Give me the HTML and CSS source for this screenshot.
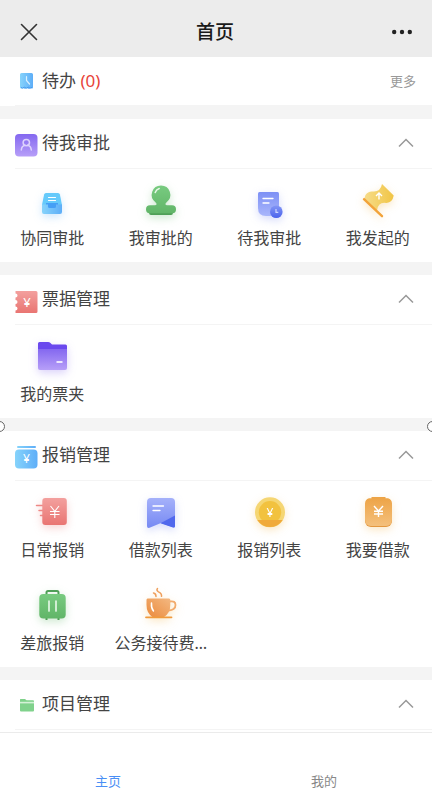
FILE: index.html
```html
<!DOCTYPE html>
<html lang="zh-CN">
<head>
    <meta charset="UTF-8">
    <meta name="viewport" content="width=device-width, initial-scale=1.0">
    <title>首页</title>
    <link rel="stylesheet" href="styles.css">
</head>
<body>
    <!-- shared gradients -->
    <svg class="defs" width="0" height="0" aria-hidden="true">
        <defs>
            <linearGradient id="sky" x1="0" y1="0" x2="1" y2="0"><stop offset="0" stop-color="#86d3fb"/><stop offset="1" stop-color="#5eaef8"/></linearGradient>
            <linearGradient id="violet" x1="0" y1="0" x2="0" y2="1"><stop offset="0" stop-color="#8468f0"/><stop offset="1" stop-color="#b79ff8"/></linearGradient>
            <linearGradient id="red" x1="0" y1="0" x2="0" y2="1"><stop offset="0" stop-color="#f3a09e"/><stop offset="1" stop-color="#e97572"/></linearGradient>
            <linearGradient id="green" x1="0" y1="0" x2="0" y2="1"><stop offset="0" stop-color="#78cb80"/><stop offset="1" stop-color="#61b568"/></linearGradient>
            <linearGradient id="indigo" x1="0" y1="0" x2="0" y2="1"><stop offset="0" stop-color="#7d90f5"/><stop offset="1" stop-color="#a9b6fb"/></linearGradient>
            <linearGradient id="indigo-deep" x1="0" y1="0" x2="0" y2="1"><stop offset="0" stop-color="#a5b1fa"/><stop offset="1" stop-color="#7689f3"/></linearGradient>
            <linearGradient id="clock" x1="0" y1="0" x2="0" y2="1"><stop offset="0" stop-color="#8396f5"/><stop offset="1" stop-color="#4a63ec"/></linearGradient>
            <linearGradient id="gold" x1="0" y1="0" x2="1" y2="0"><stop offset="0" stop-color="#f6dc8a"/><stop offset="1" stop-color="#f1c545"/></linearGradient>
            <linearGradient id="orange" x1="0" y1="0" x2="0" y2="1"><stop offset="0" stop-color="#eda345"/><stop offset="1" stop-color="#f4c07c"/></linearGradient>
            <linearGradient id="coffee" x1="1" y1="0" x2="0" y2="1"><stop offset="0" stop-color="#f3b881"/><stop offset="1" stop-color="#eb8a3c"/></linearGradient>
        </defs>
    </svg>

    <div class="app">
        <header class="navbar">
            <button class="nav-btn" type="button" aria-label="关闭">
                <svg width="18" height="18" viewBox="0 0 18 18"><path d="M1.500 1.500l15 15M16.500 1.500l-15 15" fill="none" stroke="#333" stroke-width="1.600" stroke-linecap="round"/></svg>
            </button>
            <h1 class="nav-title">首页</h1>
            <button class="nav-btn" type="button" aria-label="菜单">
                <svg width="20" height="18" viewBox="0 0 20 18" fill="#222"><circle cx="2.200" cy="9" r="2.200"/><circle cx="10" cy="9" r="2.200"/><circle cx="17.800" cy="9" r="2.200"/></svg>
            </button>
        </header>

        <main class="content">
            <section class="card">
                <div class="card-head todo">
                    <svg class="head-icon" viewBox="0 0 24 28">
                        <path d="M6.500 5h10Q18 5 18 6.500v13q0 1-.9 1l-1.600-.6-1.700 1-2-1-2 1-1.700-1-1.600.6q-1.500 0-1.500-1v-13Q5 5 6.500 5z" fill="url(#sky)"/>
                        <path d="M11.500 8.500v4l3 3.500" fill="none" stroke="#d9f1ff" stroke-width="1.200" stroke-linecap="round"/>
                        <path d="M6 19.500l1.600.7 1.700-1 2 1 2-1 1.700 1 2-.7" fill="none" stroke="#4298ef" stroke-width="1"/>
                    </svg>
                    <h2 class="card-title">待办 <span class="count">(0)</span></h2>
                    <a class="more" href="#">更多</a>
                </div>
            </section>

            <section class="card">
                <div class="card-head">
                    <svg class="head-icon" viewBox="0 0 24 28">
                        <rect y="4" width="22.500" height="22.500" rx="4" fill="url(#violet)"/>
                        <g fill="none" stroke="#ddd3fd" stroke-width="1.500" stroke-linecap="round"><circle cx="11.300" cy="12.600" r="3.200"/><path d="M6.300 20c.3-2.700 1.700-4.200 3.600-4.700M16.300 20c-.3-2.700-1.700-4.200-3.600-4.700"/></g>
                    </svg>
                    <h2 class="card-title">待我审批</h2>
                    <button class="fold" type="button" aria-label="收起待我审批"><svg viewBox="0 0 20 20"><path d="M3 13.500l7-7 7 7"/></svg></button>
                </div>
                <div class="tiles">
                    <a class="tile" href="#">
                        <svg class="tile-icon glow-blue" viewBox="0 0 48 48">
                            <path d="M18 14h12q1.500 0 1.900 1.500L34 26H14l2.100-10.500Q16.500 14 18 14z" fill="#65cafb"/>
                            <path d="M18 24h12v6H18z" fill="#459ff6"/>
                            <path d="M14 25.500h6v2q0 1.500 1.500 1.500h5q1.500 0 1.500-1.500v-2h6V33q0 2-2 2H16q-2 0-2-2z" fill="url(#sky)"/>
                            <path d="M20.500 18.500h7M20.500 21.500h7" stroke="#fff" stroke-width="1.200" stroke-linecap="round"/>
                        </svg>
                        <span class="tile-label">协同审批</span>
                    </a>
                    <a class="tile" href="#">
                        <svg class="tile-icon glow-green" viewBox="0 0 48 48">
                            <path d="M12 32h24v1.500q0 2.500-2 2.500H14q-2 0-2-2.500z" fill="#4f9f57"/>
                            <path d="M24 6.500a9.300 9.300 0 0 1 5.600 16.700q-1.600 1.200-1.100 2.300.3.800 1.500.8h5q4 0 4 4t-3.500 4h-23Q9 34.300 9 30.300t4-4h5q1.200 0 1.500-.8.500-1.100-1.100-2.300A9.300 9.300 0 0 1 24 6.500z" fill="url(#green)"/>
                            <path d="M18.200 13.500q1-3 4-4" fill="none" stroke="#e8f8e8" stroke-width="1.500" stroke-linecap="round"/>
                        </svg>
                        <span class="tile-label">我审批的</span>
                    </a>
                    <a class="tile" href="#">
                        <svg class="tile-icon glow-indigo" viewBox="0 0 48 48">
                            <path d="M14.500 13h18q1.500 0 1.500 1.500V37H21q-8 0-8-8V14.500q0-1.500 1.500-1.500z" fill="url(#indigo)"/>
                            <path d="M18 19.500h10M18 24h6" stroke="#fff" stroke-width="1.300" stroke-linecap="round"/>
                            <circle cx="31.300" cy="32.700" r="6.300" fill="url(#clock)"/>
                            <path d="M31 30v3.300h2.300" fill="none" stroke="#cdd6ff" stroke-width="1.200"/>
                        </svg>
                        <span class="tile-label">待我审批</span>
                    </a>
                    <a class="tile" href="#">
                        <svg class="tile-icon glow-gold" viewBox="0 0 48 48">
                            <path d="M10 20.500L11.500 16Q14 12 19 12.500q7.500.5 9-7.500L39.700 16.500Q38.500 23.500 32.500 24q-8.500-1.500-9.500 7.500z" fill="url(#gold)"/>
                            <path d="M10 20.200l18 17" stroke="#f2a33a" stroke-width="2.400" stroke-linecap="round"/>
                            <path d="M25 20.500v-6M22 17l3-3 3 3" fill="none" stroke="#fff" stroke-width="1.400"/>
                        </svg>
                        <span class="tile-label">我发起的</span>
                    </a>
                </div>
            </section>

            <section class="card">
                <div class="card-head">
                    <svg class="head-icon" viewBox="0 0 24 28">
                        <path d="M.5 5h20.500q1.500 0 1.500 1.500v19q0 1.500-1.500 1.500H.5v-2.500a2 2 0 0 0 0-4v-2.500a2 2 0 0 0 0-4v-2.500a2 2 0 0 0 0-4z" fill="url(#red)"/>
                        <text class="yen" x="12" y="20.500" font-size="13">¥</text>
                    </svg>
                    <h2 class="card-title">票据管理</h2>
                    <button class="fold" type="button" aria-label="收起票据管理"><svg viewBox="0 0 20 20"><path d="M3 13.500l7-7 7 7"/></svg></button>
                </div>
                <div class="tiles">
                    <a class="tile" href="#">
                        <svg class="tile-icon glow-violet" viewBox="0 0 48 48">
                            <path d="M11.500 7H20q1.500 0 2.500 1l1.500 1.500h13.500q1.500 0 1.500 1.500v6H10V8.500Q10 7 11.500 7z" fill="#6a48ee"/>
                            <path d="M10 14h29v19q0 2-2 2H12q-2 0-2-2z" fill="url(#violet)"/>
                            <path d="M28.500 27h6" stroke="#fff" stroke-width="1.600"/>
                        </svg>
                        <span class="tile-label">我的票夹</span>
                    </a>
                </div>
            </section>

            <section class="card">
                <div class="card-head">
                    <svg class="head-icon" viewBox="0 0 24 28">
                        <rect x="2" y="4" width="19" height="2" rx="1" fill="url(#sky)"/>
                        <rect y="7.500" width="22.500" height="19" rx="4" fill="url(#sky)"/>
                        <text class="yen" x="11.500" y="21" font-size="12">¥</text>
                    </svg>
                    <h2 class="card-title">报销管理</h2>
                    <button class="fold" type="button" aria-label="收起报销管理"><svg viewBox="0 0 20 20"><path d="M3 13.500l7-7 7 7"/></svg></button>
                </div>
                <div class="tiles">
                    <a class="tile" href="#">
                        <svg class="tile-icon glow-red" viewBox="0 0 48 48">
                            <path d="M8.500 14.500H15M11 19.500h4M12.500 24.500H15" stroke="#ee8785" stroke-width="1.500" stroke-linecap="round"/>
                            <rect x="14.300" y="7" width="24.500" height="27" rx="3" fill="url(#red)"/>
                            <path d="M22.500 15l4.300 5.300L31 15M26.800 20.300V27M22 20.500h9.500M22 23.500h9.500" fill="none" stroke="#fff" stroke-width="1.100"/>
                        </svg>
                        <span class="tile-label">日常报销</span>
                    </a>
                    <a class="tile" href="#">
                        <svg class="tile-icon glow-indigo" viewBox="0 0 48 48">
                            <path d="M14 7h20q4 0 4 4v23.500q0 2.500-2 1.800L24 32l-11.500 4.800Q10 37.500 10 35V11q0-4 4-4z" fill="url(#indigo-deep)"/>
                            <path d="M23.500 32.200L38 24.500V35q0 2-2 1.500z" fill="#5068ed"/>
                            <path d="M16 15h10.500M16 19.500h7" stroke="#fff" stroke-width="1.300" stroke-linecap="round"/>
                        </svg>
                        <span class="tile-label">借款列表</span>
                    </a>
                    <a class="tile" href="#">
                        <svg class="tile-icon glow-gold" viewBox="0 0 48 48">
                            <circle cx="25" cy="21.300" r="15" fill="#f5d673"/>
                            <circle cx="25" cy="21.300" r="11.200" fill="#f2c23f"/>
                            <path d="M12.300 29h25.400a15 15 0 0 1-25.400 0z" fill="#f0aa3b"/>
                            <text class="yen" x="25" y="25.500" font-size="12">¥</text>
                        </svg>
                        <span class="tile-label">报销列表</span>
                    </a>
                    <a class="tile" href="#">
                        <svg class="tile-icon glow-gold" viewBox="0 0 48 48">
                            <rect x="11" y="9" width="27" height="27" rx="6" fill="#e3983f"/>
                            <path d="M17.500 6h14v1.300H34q4 1 4 5.700v15q0 7-6 7H17q-6 0-6-7V13q0-4.700 4-5.700h2.500z" fill="url(#orange)"/>
                            <path d="M20 15l4.500 5 4.500-5M24.500 20v6M20 20.300h9M20 23h9" fill="none" stroke="#fff" stroke-width="1.400"/>
                        </svg>
                        <span class="tile-label">我要借款</span>
                    </a>
                    <a class="tile" href="#">
                        <svg class="tile-icon glow-green" viewBox="0 0 48 48">
                            <path d="M18.500 11V8.500Q18.500 7 20 7h9q1.500 0 1.500 1.500V11M18.500 34v2M30.500 34v2" fill="none" stroke="#4f9f57" stroke-width="2"/>
                            <rect x="11.300" y="10" width="26.400" height="24.500" rx="4" fill="url(#green)"/>
                            <path d="M21 17v10M28 17v10" stroke="#e2f6e3" stroke-width="1.700" stroke-linecap="round"/>
                        </svg>
                        <span class="tile-label">差旅报销</span>
                    </a>
                    <a class="tile" href="#">
                        <svg class="tile-icon glow-gold" viewBox="0 0 48 48">
                            <path d="M33 17.500q5.500-1 5.500 3.500 0 5-7 5.500" fill="none" stroke="#f2ab6c" stroke-width="1.800"/>
                            <path d="M10.500 14.500h21.500q1.300 0 1.300 1.500v5q0 8-6.300 12H15.500q-6-4-6-12v-5q0-1.500 1-1.500z" fill="url(#coffee)"/>
                            <path d="M14.500 19q-.5 5 2 8" fill="none" stroke="#fff" stroke-width="1.500" stroke-linecap="round"/>
                            <path d="M9 33.300h25.500" stroke="#f09a3c" stroke-width="1.800" stroke-linecap="round"/>
                            <path d="M20.500 4.500q-1.500 2 1 3.300 3.500 1.700 3 4.500M16.500 9q2.500.5 2.500 3.500" fill="none" stroke="#ef9f5c" stroke-width="1.500" stroke-linecap="round"/>
                        </svg>
                        <span class="tile-label">公务接待费…</span>
                    </a>
                </div>
            </section>

            <section class="card">
                <div class="card-head">
                    <svg class="head-icon" viewBox="0 0 24 28">
                        <path d="M5.500 8H10l1.500 1.300H18q1 0 1 1V13H5V8.500Q5 8 5.500 8z" fill="#7fd18a"/>
                        <path d="M5 10.800h14v2H5z" fill="#d5f2d8"/>
                        <path d="M5 12.500h14v7q0 1-1 1H6q-1 0-1-1z" fill="#80d28c"/>
                    </svg>
                    <h2 class="card-title">项目管理</h2>
                    <button class="fold" type="button" aria-label="收起项目管理"><svg viewBox="0 0 20 20"><path d="M3 13.500l7-7 7 7"/></svg></button>
                </div>
            </section>
        </main>

        <nav class="tabbar">
            <a class="tab active" href="#">主页</a>
            <a class="tab" href="#">我的</a>
        </nav>

        <!-- round handles over the screen edges -->
        <span class="handle handle-left"></span>
        <span class="handle handle-right"></span>
    </div>
</body>
</html>
```

FILE: styles.css
```css
* {
    box-sizing: border-box;
}

body {
    margin: 0;
    background: #f4f4f4;
    color: #444;
    font-family: "Noto Sans", "Noto Sans CJK SC", sans-serif;
}

a {
    color: inherit;
    text-decoration: none;
}

button {
    padding: 0;
    border: 0;
    background: none;
    cursor: pointer;
}

.defs {
    position: absolute;
}

.app {
    position: relative;
    display: flex;
    flex-direction: column;
    height: 100vh;
    overflow: hidden;
}

/* top bar */
.navbar {
    display: flex;
    flex-shrink: 0;
    align-items: center;
    justify-content: space-between;
    padding: 18px 20px 11px;
    background: #ececec;
}

.nav-btn {
    display: flex;
}

.nav-title {
    margin: 0;
    font-size: 19px;
    font-weight: 500;
    line-height: 28px;
    color: #1a1a1a;
}

/* cards */
.content {
    display: flex;
    flex: 1;
    flex-direction: column;
    gap: 13px;
    min-height: 0;
    overflow: hidden;
}

.card {
    flex-shrink: 0;
    background: #fff;
}

.card:last-child {
    flex-grow: 1;
}

.card-head {
    display: flex;
    align-items: center;
    gap: 3px;
    height: 50px;
    margin-left: 15px;
    padding: 0 16px 2px 0;
    border-bottom: 1px solid #f4f4f4;
}

.todo {
    height: 49px;
    padding-bottom: 0;
}

.head-icon {
    width: 24px;
    height: 28px;
    margin-top: 2px;
}

.card-title {
    flex: 1;
    margin: 0;
    font-size: 17px;
    font-weight: 400;
    line-height: 24px;
}

.count {
    color: #e8433a;
}

.more {
    font-size: 13px;
    line-height: 20px;
    color: #999;
}

.fold {
    display: flex;
    width: 20px;
    height: 20px;
}

.fold path {
    fill: none;
    stroke: #999;
    stroke-width: 1.5;
}

/* icon grid */
.tiles {
    display: grid;
    grid-template-columns: repeat(4, 1fr);
    margin-left: -2px;
}

.tile {
    display: flex;
    flex-direction: column;
    align-items: center;
    padding: 10px 0 13px;
}

.tile-icon {
    width: 48px;
    height: 48px;
    overflow: visible;
}

.tile-label {
    font-size: 16px;
    line-height: 22px;
    white-space: nowrap;
}

.yen {
    fill: #fff;
    font-family: "Noto Sans", sans-serif;
    text-anchor: middle;
}

.glow-blue {
    filter: drop-shadow(0 3px 4px rgba(94, 174, 248, 0.3));
}

.glow-green {
    filter: drop-shadow(0 3px 4px rgba(97, 181, 104, 0.3));
}

.glow-indigo {
    filter: drop-shadow(0 3px 4px rgba(118, 137, 243, 0.3));
}

.glow-gold {
    filter: drop-shadow(0 3px 4px rgba(241, 180, 69, 0.3));
}

.glow-violet {
    filter: drop-shadow(0 3px 4px rgba(132, 104, 240, 0.3));
}

.glow-red {
    filter: drop-shadow(0 3px 4px rgba(233, 117, 114, 0.3));
}

/* bottom tabs */
.tabbar {
    display: flex;
    flex-shrink: 0;
    border-top: 1px solid #ebebeb;
    background: #fff;
}

.tab {
    flex: 1;
    padding: 38px 0 11px;
    font-size: 13px;
    line-height: 20px;
    text-align: center;
    color: #888;
}

.tab.active {
    color: #4a8ff5;
}

.handle {
    position: absolute;
    top: 421px;
    width: 11px;
    height: 11px;
    border: 1px solid #666;
    border-radius: 50%;
    background: #fff;
}

.handle-left {
    left: -6px;
}

.handle-right {
    right: -6px;
}
```
